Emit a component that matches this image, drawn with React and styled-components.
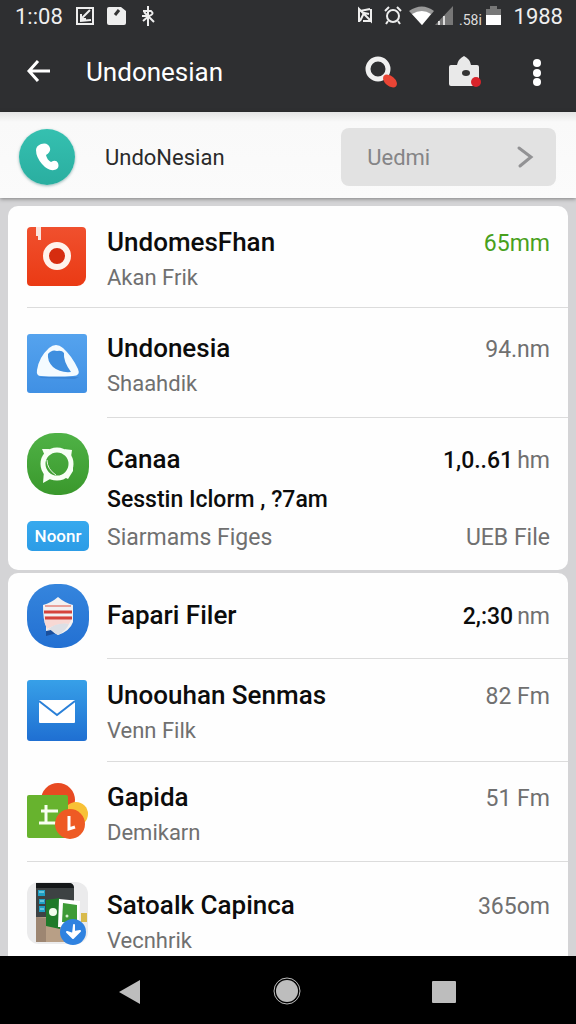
import React from "react";
import styled, { createGlobalStyle } from "styled-components";

const GlobalStyle = createGlobalStyle`
  * {
    box-sizing: border-box;
  }
  body {
    margin: 0;
    font-family: Roboto, "Liberation Sans", sans-serif;
    background: #d4d4d6;
  }
  button {
    font-family: inherit;
    border: none;
    background: none;
    padding: 0;
    cursor: pointer;
  }
  svg {
    display: block;
  }
`;

const CameraIcon = () => (
  <svg width="59" height="59" viewBox="0 0 59 59">
    <defs>
      <linearGradient id="red" x1="0" y1="0" x2="0" y2="1">
        <stop offset="0" stopColor="#f0502e" />
        <stop offset="1" stopColor="#ea3a14" />
      </linearGradient>
    </defs>
    <path d="M4 0h51a4 4 0 0 1 4 4v46a9 9 0 0 1-9 9H4a4 4 0 0 1-4-4V4a4 4 0 0 1 4-4z" fill="url(#red)" />
    <path d="M9 0h5v13h-3V9H9z" fill="#fbe3dc" />
    <circle cx="30" cy="29" r="11" fill="#d62d10" stroke="#fff3ec" strokeWidth="6" />
  </svg>
);

const DriveIcon = () => (
  <svg width="60" height="59" viewBox="0 0 60 59">
    <defs>
      <linearGradient id="sky" x1="0" y1="0" x2="0" y2="1">
        <stop offset="0" stopColor="#55a3ee" />
        <stop offset="1" stopColor="#4090e4" />
      </linearGradient>
    </defs>
    <rect width="60" height="59" rx="3" fill="url(#sky)" />
    <path d="M12 43l40 0-4 2-34-1z" fill="#2f78c8" opacity="0.5" />
    <path d="M22 14q7-6 14 0 9 8 15 21 3 7-5 7-16 1-32 0-5 0-4-6 2-13 12-22z" fill="#f4fbff" />
    <path d="M21 20q4-5 9-3 5-1 7 2-1 8 7 19-11 1-18-5-6-6-5-13z" fill="#3f8fdf" />
  </svg>
);

const ChatIcon = () => (
  <svg width="62" height="62" viewBox="0 0 62 62">
    <defs>
      <linearGradient id="leaf" x1="0" y1="0" x2="0" y2="1">
        <stop offset="0" stopColor="#4fb246" />
        <stop offset="1" stopColor="#3a982c" />
      </linearGradient>
    </defs>
    <rect width="62" height="62" rx="28" fill="url(#leaf)" />
    <path d="M17 38l-1 12 9-5z" fill="#f7fff5" />
    <circle cx="30" cy="31" r="14" fill="none" stroke="#f7fff5" strokeWidth="5" />
    <path d="M15 16l8 0-5 7zM37 16l8 1-1 7zM46 33v5l-5 8-4-2z" fill="#f7fff5" />
    <path d="M20 27q0 9 9 15" fill="none" stroke="#e6f6e2" strokeWidth="1" />
  </svg>
);

const ShieldIcon = () => (
  <svg width="62" height="64" viewBox="0 0 62 64">
    <defs>
      <linearGradient id="azure" x1="0" y1="0" x2="0" y2="1">
        <stop offset="0" stopColor="#3585dd" />
        <stop offset="1" stopColor="#2370d2" />
      </linearGradient>
    </defs>
    <rect width="62" height="64" rx="28" fill="url(#azure)" />
    <path d="M19 43l5 0 6 6-11 3z" fill="#1a4f9c" />
    <path d="M31 13q7 6 15 8v17q-3 9-15 13-4-2-7-5l-5 1 0-5q-3-5-3-21 8-2 15-8z" fill="#f2f1f2" />
    <path d="M17 32h28q-1 5-3 8-11-1-22 5-3-6-3-13z" fill="#f7d8d4" />
    <path d="M20 46q10-8 22-6-3 7-11 11-4-2-7-5z" fill="#dcdfe5" />
    <path d="M18 22h26" stroke="#e8a19a" strokeWidth="2" />
    <path d="M17 28h28M18 34h27" stroke="#d5443c" strokeWidth="3" />
  </svg>
);

const MailIcon = () => (
  <svg width="60" height="61" viewBox="0 0 60 61">
    <defs>
      <linearGradient id="mail" x1="0" y1="0" x2="0" y2="1">
        <stop offset="0" stopColor="#37a0e8" />
        <stop offset="1" stopColor="#1f6fd2" />
      </linearGradient>
    </defs>
    <rect width="60" height="61" rx="3" fill="url(#mail)" />
    <rect x="12" y="20" width="36" height="23" rx="1" fill="#fff" />
    <path d="M12 21l18 14 18-14" fill="none" stroke="#2a80d8" strokeWidth="2" />
  </svg>
);

const ShapesIcon = () => (
  <svg width="62" height="58" viewBox="0 0 62 58">
    <circle cx="31" cy="17" r="17" fill="#e84a22" />
    <circle cx="49" cy="31" r="12" fill="#f8c136" />
    <rect y="12" width="41" height="43" rx="2" fill="#67b32e" />
    <path d="M19 22v18M14 28h17M12 40h18" stroke="#f8fff0" strokeWidth="3" fill="none" />
    <circle cx="43" cy="41" r="15" fill="#ee5a24" />
    <path d="M42 33v13l6-2" stroke="#fff" strokeWidth="3" fill="none" />
  </svg>
);

const PhotoIcon = () => (
  <svg width="62" height="64" viewBox="0 0 62 64">
    <rect width="61" height="62" rx="12" fill="#ebebec" />
    <path d="M9 1h33q5 0 5 5v54H9z" fill="#3d4243" />
    <path d="M9 1h33q4 0 5 5H9z" fill="#151819" />
    <path d="M9 35l12 0 20 12v13H9z" fill="#b89f86" />
    <path d="M9 35l10 1v24H9z" fill="#9d8672" />
    <path d="M11 8h7v6h-7zM12 17h6v5h-6zM12 24h6v6h-6z" fill="#1e9fc4" />
    <path d="M12 10h5M13 19h4M13 27h4" stroke="#b4e8f4" strokeWidth="1" />
    <path d="M19 18l14-2v31l-14-3z" fill="#1f7a2a" />
    <path d="M32 17l21 2-1 26H31z" fill="#fff" />
    <path d="M36 21l14 2v18l-15-1z" fill="#3e9b37" />
    <circle cx="26" cy="30" r="4" fill="#f3fbef" />
    <circle cx="40" cy="34" r="1.500" fill="#d7f0cf" />
    <path d="M54 31h6v9h-6z" fill="#d8ba4b" />
    <circle cx="46" cy="50" r="13" fill="#2f82e0" />
    <path d="M47 43v7l6-1-7 7-6-6 6 2z" fill="#fff" stroke="#fff" strokeWidth="2" strokeLinejoin="round" />
  </svg>
);

const CLOUD_APPS = [
  { icon: <CameraIcon />, title: "UndomesFhan", sub: "Akan Frik", amount: "65mm", green: true, height: 102, fullLine: true },
  { icon: <DriveIcon />, title: "Undonesia", sub: "Shaahdik", amount: "94.nm", height: 110 },
];

const FILE_APPS = [
  { icon: <ShieldIcon />, title: "Fapari Filer", strong: "2,:30", amount: "nm", height: 86 },
  { icon: <MailIcon />, title: "Unoouhan Senmas", sub: "Venn Filk", amount: "82 Fm", height: 103 },
  { icon: <ShapesIcon />, title: "Gapida", sub: "Demikarn", amount: "51 Fm", height: 100, fullLine: true },
  { icon: <PhotoIcon />, title: "Satoalk Capinca", sub: "Vecnhrik", amount: "365om", height: 103, last: true },
];

const bodyPadding = ({ $sub, $last }) => {
  if ($last) return "18px";
  return $sub ? "6px" : "0";
};

const AppRow = ({ data }) => {
  const { icon, title, sub, amount, strong, green, height, fullLine, last } = data;
  return (
    <Row $height={height} $fullLine={fullLine}>
      <IconCell>{icon}</IconCell>
      <Body $line={!fullLine && !last} $sub={sub} $last={last}>
        <Line>
          <Title>{title}</Title>
          <Amount $green={green}>
            {strong && <strong>{strong}</strong>}
            {amount}
          </Amount>
        </Line>
        {sub && <Sub>{sub}</Sub>}
      </Body>
    </Row>
  );
};

const StatusIcons = () => (
  <svg width="80" height="20" viewBox="0 0 80 20" fill="none" stroke="#eee" strokeWidth="2">
    <rect x="2" y="2" width="16" height="16" />
    <path d="M15 4L7 12M6 8v5h5M5 15l11-1" />
    <path d="M34 1h12l5 4v12q0 2-2 2H34q-2 0-2-2V3q0-2 2-2z" fill="#eee" stroke="none" />
    <path d="M40 9l4-5" stroke="#333" strokeWidth="3" />
    <path d="M73 0v20M68 5h8q4 3-2 5l-6 5M69 6l10 10M67 10h8" />
  </svg>
);

const SignalIcons = () => (
  <svg width="146" height="22" viewBox="0 0 146 22" fill="none" stroke="#eee" strokeWidth="2">
    <path d="M3 17V4l12 12V4M4 6l10-2M4 16l4-8 5 1M7 16h8" />
    <circle cx="37" cy="11" r="6" />
    <path d="M29 6l4-4M41 2l4 4M32 16l-2 3M42 16l2 3" />
    <path d="M53 6q13-9 25 0L66 20z" fill="#999" stroke="none" />
    <path d="M56 9q10-6 19 0l-9 11z" fill="#fff" stroke="none" />
    <path d="M97 1v19H79z" fill="#777" stroke="none" />
    <path d="M83 16v4M88 11v9" stroke="#ddd" />
    <path d="M134 1h7v3h4v6h-15V4h4z" fill="#777" stroke="none" />
    <path d="M130 10h15v10h-15z" fill="#fff" stroke="none" />
    <text x="103" y="20" fill="#ddd" stroke="none" fontSize="14">
      .58i
    </text>
  </svg>
);

const App = () => (
  <Page>
    <GlobalStyle />
    <Top>
      <StatusBar>
        <span>1::08</span>
        <StatusIcons />
        <Spacer />
        <SignalIcons />
        <span>1988</span>
      </StatusBar>
      <AppBar>
        <button aria-label="Back">
          <svg width="26" height="26" viewBox="0 0 26 26" fill="none" stroke="#fff" strokeWidth="3">
            <path d="M12 2L3 12l9 10M3 12h21" />
          </svg>
        </button>
        <h1>Undonesian</h1>
        <Actions>
          <button aria-label="Search">
            <svg width="34" height="34" viewBox="0 0 34 34">
              <circle cx="14" cy="14" r="10" fill="none" stroke="#f0f0f0" strokeWidth="5" />
              <ellipse cx="26" cy="26" rx="8" ry="5" transform="rotate(40 26 26)" fill="#ea4535" />
            </svg>
          </button>
          <button aria-label="Store">
            <svg width="34" height="34" viewBox="0 0 34 34">
              <path d="M3 10h6q1-6 7-9 6 3 7 9h6q2 0 2 2v17q0 2-2 2H3q-2 0-2-2V12q0-2 2-2z" fill="#e9e9e9" />
              <ellipse cx="18" cy="18" rx="4" ry="3" fill="#333" />
              <circle cx="28" cy="27" r="5" fill="#d8232a" />
            </svg>
          </button>
          <button aria-label="More options">
            <svg width="10" height="30" viewBox="0 0 10 30" fill="#fff">
              <circle cx="5" cy="6" r="4" />
              <circle cx="5" cy="16" r="4" />
              <circle cx="5" cy="25" r="4" />
            </svg>
          </button>
        </Actions>
      </AppBar>
    </Top>
    <Account>
      <Avatar>
        <svg width="24" height="30" viewBox="0 0 24 30">
          <path
            d="M6 2q7-2 9 4 1 4-4 7 1 5 5 7 5-3 7 1 2 6-4 7-6 1-12-6Q1 15 1 8q0-4 5-6z"
            fill="#fff"
          />
        </svg>
      </Avatar>
      <h2>UndoNesian</h2>
      <AccountButton>
        Uedmi
        <svg width="18" height="24" viewBox="0 0 18 24" fill="none" stroke="#929294" strokeWidth="3">
          <path d="M3 3l12 9-11 9" strokeLinecap="round" />
        </svg>
      </AccountButton>
    </Account>
    <List>
      <Card>
        {CLOUD_APPS.map((app) => (
          <AppRow key={app.title} data={app} />
        ))}
        <SessionRow>
          <SessionIcons>
            <ChatIcon />
            <Badge>Noonr</Badge>
          </SessionIcons>
          <SessionBody>
            <Line>
              <Title>Canaa</Title>
              <Amount>
                <strong>1,0..61</strong>hm
              </Amount>
            </Line>
            <Session>Sesstin Iclorm , ?7am</Session>
            <Line>
              <Sub $large>Siarmams Figes</Sub>
              <Sub $large>UEB File</Sub>
            </Line>
          </SessionBody>
        </SessionRow>
      </Card>
      <Card>
        {FILE_APPS.map((app) => (
          <AppRow key={app.title} data={app} />
        ))}
      </Card>
    </List>
    <NavBar>
      <button aria-label="Back">
        <svg width="24" height="26" viewBox="0 0 24 26">
          <path d="M1 14L22 2v24z" fill="#bdbdbd" />
        </svg>
      </button>
      <button aria-label="Home">
        <svg width="28" height="28" viewBox="0 0 28 28">
          <circle cx="14" cy="14" r="13" fill="none" stroke="#bdbdbd" />
          <circle cx="14" cy="14" r="11" fill="#bdbdbd" />
        </svg>
      </button>
      <button aria-label="Recent apps">
        <svg width="24" height="24" viewBox="0 0 24 24">
          <rect y="2" width="24" height="22" rx="1" fill="#bdbdbd" />
        </svg>
      </button>
    </NavBar>
  </Page>
);

export default App;

const Page = styled.div`
  display: flex;
  flex-direction: column;
  height: 100vh;
  overflow: hidden;
`;

const Top = styled.header`
  background: #2e2f31;
  color: #fff;
`;

const StatusBar = styled.div`
  display: flex;
  align-items: center;
  height: 32px;
  padding: 0 13px 0 15px;
  gap: 12px;
  font-size: 22px;
  color: #eee;
`;

const Spacer = styled.div`
  flex: 1;
`;

const AppBar = styled.div`
  display: flex;
  align-items: center;
  height: 80px;
  padding: 0 34px 0 26px;

  h1 {
    margin: 0 0 0 34px;
    font-size: 26px;
    font-weight: 400;
  }
`;

const Actions = styled.div`
  display: flex;
  align-items: center;
  gap: 50px;
  margin-left: auto;
`;

const Account = styled.section`
  display: flex;
  align-items: center;
  height: 86px;
  padding: 4px 20px 0 19px;
  background: linear-gradient(#e4e4e4, #f9f9f9 10px, #fbfbfb);
  box-shadow: 0 1px 4px rgba(0, 0, 0, 0.4);

  h2 {
    margin: 0 0 0 30px;
    font-size: 22px;
    font-weight: 400;
    color: #2a2a2a;
  }
`;

const Avatar = styled.div`
  display: flex;
  align-items: center;
  justify-content: center;
  width: 56px;
  height: 56px;
  border-radius: 50%;
  background: linear-gradient(#35c0b0, #2aaea0);
  box-shadow: 0 1px 3px rgba(0, 80, 80, 0.4);
`;

const AccountButton = styled.button`
  display: flex;
  align-items: center;
  justify-content: space-between;
  width: 40%;
  height: 58px;
  margin-left: auto;
  && {
    padding: 0 22px 0 26px;
    background: #e2e2e2;
  }
  border-radius: 8px;
  font-size: 22px;
  color: #858587;
`;

const List = styled.main`
  display: flex;
  flex-direction: column;
  flex: 1;
  gap: 3px;
  min-height: 0;
  padding: 8px 8px 0;
  overflow: hidden;
`;

const Card = styled.section`
  flex-shrink: 0;
  padding-left: 19px;
  border-radius: 10px;
  background: #fefefe;
`;

const Row = styled.div`
  display: flex;
  gap: 18px;
  height: ${({ $height }) => $height}px;
  border-bottom: ${({ $fullLine }) => ($fullLine ? "1px solid #dcdcdc" : "none")};
`;

const IconCell = styled.div`
  display: flex;
  align-items: center;
  width: 62px;
`;

const Body = styled.div`
  display: flex;
  flex-direction: column;
  justify-content: center;
  flex: 1;
  padding: ${bodyPadding} 18px 0 0;
  border-bottom: ${({ $line }) => ($line ? "1px solid #dcdcdc" : "none")};
`;

const Line = styled.div`
  display: flex;
  align-items: baseline;
  justify-content: space-between;
`;

const Title = styled.h3`
  margin: 0;
  font-size: 26px;
  font-weight: 500;
  line-height: 34px;
  color: #0c0c0c;
`;

const Sub = styled.p`
  margin: 0;
  font-size: ${({ $large }) => ($large ? "23px" : "22px")};
  line-height: 34px;
  color: #707070;
`;

const Amount = styled.span`
  font-size: 23px;
  line-height: 34px;
  color: ${({ $green }) => ($green ? "#48a01c" : "#707070")};

  strong {
    margin-right: 4px;
    font-weight: 500;
    color: #0c0c0c;
  }
`;

const SessionRow = styled.div`
  display: flex;
  gap: 18px;
  padding: 15px 0;
`;

const SessionIcons = styled.div`
  display: flex;
  flex-direction: column;
  gap: 26px;
  width: 62px;
`;

const SessionBody = styled.div`
  flex: 1;
  padding: 9px 18px 0 0;
`;

const Session = styled.p`
  margin: 5px 0 4px;
  font-size: 23px;
  font-weight: 500;
  line-height: 34px;
  color: #0c0c0c;
`;

const Badge = styled.span`
  height: 30px;
  border-radius: 5px;
  background: linear-gradient(#37a9ee, #2c9ce6);
  font-size: 17px;
  font-weight: 500;
  line-height: 30px;
  text-align: center;
  color: #fff;
`;

const NavBar = styled.nav`
  display: flex;
  align-items: center;
  justify-content: space-between;
  height: 68px;
  padding: 2px 120px 0 118px;
  background: #000;
`;
